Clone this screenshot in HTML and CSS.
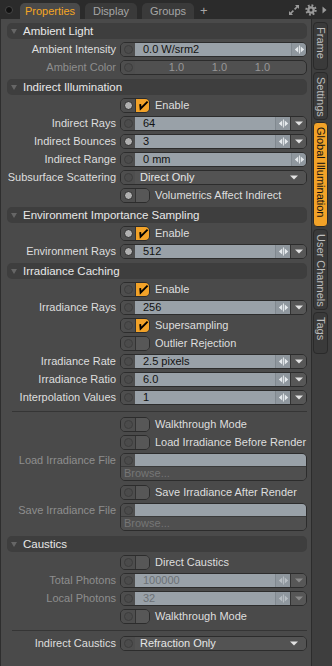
FILE: index.html
```html
<!DOCTYPE html>
<html lang="en">
  <head>
    <meta charset="UTF-8" />
    <title>Properties</title>
    <link rel="stylesheet" href="styles.css">
  </head>
  <body>
    <svg class="defs" width="0" height="0">
      <symbol id="spin" viewBox="0 0 12 10">
        <path d="M0.8 5 L4.6 1.6 V8.4Z M7.4 1.6 L11.2 5 L7.4 8.4Z" />
        <rect x="5.5" y="0.5" width="1" height="9" />
      </symbol>
      <symbol id="down" viewBox="0 0 8 5">
        <path d="M0 0.5H8L4 4.5Z" />
      </symbol>
      <symbol id="tick" viewBox="0 0 12 12">
        <path d="M3.2 5.2 L3.6 9.6 L10.6 2.6" fill="none" stroke="#000" stroke-width="1.9" />
      </symbol>
    </svg>

    <div class="app">
      <div class="topbar">
        <span class="dot"></span>
        <div class="tab tab-props active">Properties</div>
        <div class="tab tab-disp">Display</div>
        <div class="tab tab-groups">Groups</div>
        <span class="plus">+</span>
        <div class="tools">
          <svg width="12" height="12" viewBox="0 0 12 12" class="ico">
            <path d="M7 1H11V5L9.6 3.6L7.2 6L6 4.8L8.4 2.4Z M5 11H1V7L2.4 8.4L4.8 6L6 7.2L3.6 9.6Z" />
          </svg>
          <svg width="12" height="12" viewBox="0 0 12 12" class="ico">
            <circle cx="6" cy="6" r="4.6" fill="none" stroke="#9a9a9a" stroke-width="2.2" stroke-dasharray="1.8 1.8" />
            <circle cx="6" cy="6" r="3.8" />
            <circle cx="6" cy="6" r="1.5" fill="#2b2b2b" />
          </svg>
          <svg width="5" height="8" viewBox="0 0 5 8" class="ico">
            <path d="M0.5 0.5L4.5 4L0.5 7.5Z" />
          </svg>
        </div>
      </div>

      <div class="main">
        <div class="panel">
          <div class="sec">Ambient Light</div>
          <div class="row">
            <span class="lbl">Ambient Intensity</span>
            <div class="field"><span class="key"></span><span class="val">0.0 W/srm2</span><span class="spin"><svg><use href="#spin" /></svg></span></div>
          </div>
          <div class="row">
            <span class="lbl dim">Ambient Color</span>
            <div class="field dark"><span class="key"></span><span class="vals"><span>1.0</span><span>1.0</span><span>1.0</span></span></div>
          </div>

          <div class="sec">Indirect Illumination</div>
          <div class="row">
            <div class="ctl"><div class="check on"><span class="key set"></span><span class="box"><svg><use href="#tick" /></svg></span></div>Enable</div>
          </div>
          <div class="row">
            <span class="lbl">Indirect Rays</span>
            <div class="field"><span class="key"></span><span class="val">64</span><span class="spin"><svg><use href="#spin" /></svg></span><span class="drop"><svg><use href="#down" /></svg></span></div>
          </div>
          <div class="row">
            <span class="lbl">Indirect Bounces</span>
            <div class="field"><span class="key set"></span><span class="val">3</span><span class="spin"><svg><use href="#spin" /></svg></span><span class="drop"><svg><use href="#down" /></svg></span></div>
          </div>
          <div class="row">
            <span class="lbl">Indirect Range</span>
            <div class="field"><span class="key"></span><span class="val">0 mm</span><span class="spin"><svg><use href="#spin" /></svg></span></div>
          </div>
          <div class="row">
            <span class="lbl">Subsurface Scattering</span>
            <div class="field combo"><span class="key"></span><span class="val">Direct Only</span><span class="arrow"><svg><use href="#down" /></svg></span></div>
          </div>
          <div class="row">
            <div class="ctl"><div class="check"><span class="key set"></span><span class="box"></span></div>Volumetrics Affect Indirect</div>
          </div>

          <div class="sec">Environment Importance Sampling</div>
          <div class="row">
            <div class="ctl"><div class="check on"><span class="key set"></span><span class="box"><svg><use href="#tick" /></svg></span></div>Enable</div>
          </div>
          <div class="row">
            <span class="lbl">Environment Rays</span>
            <div class="field"><span class="key set"></span><span class="val">512</span><span class="spin"><svg><use href="#spin" /></svg></span><span class="drop"><svg><use href="#down" /></svg></span></div>
          </div>

          <div class="sec">Irradiance Caching</div>
          <div class="row">
            <div class="ctl"><div class="check on"><span class="key"></span><span class="box"><svg><use href="#tick" /></svg></span></div>Enable</div>
          </div>
          <div class="row">
            <span class="lbl">Irradiance Rays</span>
            <div class="field"><span class="key"></span><span class="val">256</span><span class="spin"><svg><use href="#spin" /></svg></span><span class="drop"><svg><use href="#down" /></svg></span></div>
          </div>
          <div class="row">
            <div class="ctl"><div class="check on"><span class="key"></span><span class="box"><svg><use href="#tick" /></svg></span></div>Supersampling</div>
          </div>
          <div class="row">
            <div class="ctl"><div class="check"><span class="key"></span><span class="box"></span></div>Outlier Rejection</div>
          </div>
          <div class="row">
            <span class="lbl">Irradiance Rate</span>
            <div class="field"><span class="key"></span><span class="val">2.5 pixels</span><span class="spin"><svg><use href="#spin" /></svg></span><span class="drop"><svg><use href="#down" /></svg></span></div>
          </div>
          <div class="row">
            <span class="lbl">Irradiance Ratio</span>
            <div class="field"><span class="key"></span><span class="val">6.0</span><span class="spin"><svg><use href="#spin" /></svg></span><span class="drop"><svg><use href="#down" /></svg></span></div>
          </div>
          <div class="row">
            <span class="lbl">Interpolation Values</span>
            <div class="field"><span class="key"></span><span class="val">1</span><span class="spin"><svg><use href="#spin" /></svg></span><span class="drop"><svg><use href="#down" /></svg></span></div>
          </div>
          <div class="sep"></div>
          <div class="row">
            <div class="ctl"><div class="check"><span class="key"></span><span class="box"></span></div>Walkthrough Mode</div>
          </div>
          <div class="row">
            <div class="ctl"><div class="check"><span class="key"></span><span class="box"></span></div>Load Irradiance Before Render</div>
          </div>
          <div class="row file-row">
            <span class="lbl dim">Load Irradiance File</span>
            <div class="file"><div class="file-top"><span class="key"></span><span class="val"></span></div><div class="browse">Browse...</div></div>
          </div>
          <div class="row">
            <div class="ctl"><div class="check"><span class="key"></span><span class="box"></span></div>Save Irradiance After Render</div>
          </div>
          <div class="row file-row">
            <span class="lbl dim">Save Irradiance File</span>
            <div class="file"><div class="file-top"><span class="key"></span><span class="val"></span></div><div class="browse">Browse...</div></div>
          </div>

          <div class="sec">Caustics</div>
          <div class="row">
            <div class="ctl"><div class="check"><span class="key"></span><span class="box"></span></div>Direct Caustics</div>
          </div>
          <div class="row">
            <span class="lbl dim">Total Photons</span>
            <div class="field off"><span class="key"></span><span class="val">100000</span><span class="spin"><svg><use href="#spin" /></svg></span><span class="drop"><svg><use href="#down" /></svg></span></div>
          </div>
          <div class="row">
            <span class="lbl dim">Local Photons</span>
            <div class="field off"><span class="key"></span><span class="val">32</span><span class="spin"><svg><use href="#spin" /></svg></span><span class="drop"><svg><use href="#down" /></svg></span></div>
          </div>
          <div class="row">
            <div class="ctl"><div class="check"><span class="key"></span><span class="box"></span></div>Walkthrough Mode</div>
          </div>
          <div class="sep"></div>
          <div class="row">
            <span class="lbl">Indirect Caustics</span>
            <div class="field combo"><span class="key"></span><span class="val">Refraction Only</span><span class="arrow"><svg><use href="#down" /></svg></span></div>
          </div>
        </div>

        <div class="sidetabs">
          <div class="vtab t-frame">Frame</div>
          <div class="vtab t-settings">Settings</div>
          <div class="vtab t-gi active">Global Illumination</div>
          <div class="vtab t-user">User Channels</div>
          <div class="vtab t-tags">Tags</div>
        </div>
      </div>
    </div>
  </body>
</html>
```

FILE: styles.css
```css
body {
  margin: 0;
  background: #2b2b2b;
  font-family: "Liberation Sans", Arial, sans-serif;
  font-size: 11px;
  color: #dedede;
}
.defs {
  position: absolute;
}
.app {
  width: 332px;
  height: 666px;
  display: flex;
  flex-direction: column;
  overflow: hidden;
}

/* top tab strip */
.topbar {
  height: 19px;
  flex: none;
  display: flex;
  align-items: flex-end;
  background: #2b2b2b;
}
.dot {
  align-self: center;
  width: 6px;
  height: 6px;
  border-radius: 50%;
  background: #111;
  border: 1px solid #474747;
  margin: 0 7px 0 5px;
}
.tab {
  height: 16px;
  line-height: 16px;
  text-align: center;
  border-radius: 5px 5px 0 0;
  background: #3a3a3a;
  color: #a6a6a6;
  margin-right: 5px;
}
.tab-props {
  width: 60px;
}
.tab-disp,
.tab-groups {
  width: 52px;
}
.tab.active {
  background: #4a4a4a;
  color: #f5a623;
}
.plus {
  color: #a6a6a6;
  font-size: 13px;
  line-height: 17px;
  margin-left: 1px;
}
.tools {
  margin-left: auto;
  align-self: center;
  display: flex;
  align-items: center;
  gap: 5px;
  padding-right: 5px;
}
.ico {
  fill: #9a9a9a;
}

.main {
  flex: 1;
  display: flex;
}
.panel {
  width: 311px;
  box-sizing: border-box;
  background: #4a4a4a;
  border-left: 1px solid #2e2e2e;
  padding: 1px 4px 0 6px;
}

/* section headers */
.sec {
  height: 16px;
  margin: 3px 0 1px;
  background: #3e3e3e;
  border-radius: 5px;
  display: flex;
  align-items: center;
  padding-left: 4px;
  font-size: 11.5px;
  color: #e8e8e8;
}
.sec::before {
  content: "";
  border-left: 3px solid transparent;
  border-right: 3px solid transparent;
  border-top: 5px solid #666;
  margin-right: 6px;
}

.row {
  display: grid;
  grid-template-columns: 109px 187px;
  column-gap: 4px;
  height: 18px;
  align-items: center;
}
.lbl {
  text-align: right;
  white-space: nowrap;
}
.lbl.dim {
  color: #8e8e8e;
}
.ctl {
  grid-column: 2;
  display: flex;
  align-items: center;
  gap: 5px;
  white-space: nowrap;
}

/* value fields */
.field {
  display: flex;
  height: 15px;
  box-sizing: border-box;
  border: 1px solid #2c2c2c;
  border-radius: 5px;
  overflow: hidden;
  background: #505050;
}
.key {
  width: 14px;
  flex: none;
  display: flex;
  align-items: center;
  justify-content: center;
  background: #4e4e4e;
}
.key::before {
  content: "";
  width: 9px;
  height: 9px;
  box-sizing: border-box;
  border-radius: 50%;
  border: 1px solid #3c3c3c;
  background: #4b4b4b;
}
.key.set::before {
  background: #b0b0b0;
  border-color: #2a2a2a;
}
.val {
  flex: 1;
  background: #99a1a8;
  color: #111;
  padding-left: 8px;
  line-height: 13px;
  white-space: nowrap;
}
.spin {
  width: 14px;
  flex: none;
  background: #8f979e;
  border-left: 1px solid #80888f;
  display: flex;
  align-items: center;
  justify-content: center;
}
.spin svg {
  width: 11px;
  height: 9px;
  fill: #e6eaed;
}
.drop {
  width: 15px;
  flex: none;
  background: #575757;
  border-left: 1px solid #333;
  display: flex;
  align-items: center;
  justify-content: center;
}
.drop svg,
.arrow svg {
  width: 8px;
  height: 5px;
  fill: #e2e2e2;
}
.field.off .val {
  color: #6c7176;
}
.field.off .spin svg {
  fill: #b8bec3;
}
.field.off .drop svg {
  fill: #8a8a8a;
}

.field.dark .vals {
  flex: 1;
  display: flex;
  padding-left: 20px;
  color: #979797;
  line-height: 13px;
}
.field.dark .vals span {
  width: 43px;
  text-align: center;
}

.field.combo .val {
  background: #535353;
  color: #e6e6e6;
  padding-left: 5px;
}
.field.combo .arrow {
  width: 16px;
  flex: none;
  background: #535353;
  display: flex;
  align-items: center;
}

/* toggles */
.check {
  display: flex;
  width: 30px;
  height: 15px;
  box-sizing: border-box;
  border: 1px solid #2c2c2c;
  border-radius: 5px;
  overflow: hidden;
  flex: none;
}
.check .box {
  flex: 1;
  background: #575757;
  border-left: 1px solid #333;
  display: flex;
  align-items: center;
  justify-content: center;
}
.check.on .box {
  background: #f2a228;
}
.check .box svg {
  width: 12px;
  height: 12px;
}

/* file pickers */
.file-row {
  height: 32px;
  align-items: start;
  padding-top: 2px;
  box-sizing: border-box;
}
.file-row .lbl {
  line-height: 14px;
}
.file {
  height: 28px;
  box-sizing: border-box;
  border: 1px solid #2c2c2c;
  border-radius: 5px;
  overflow: hidden;
  display: flex;
  flex-direction: column;
}
.file-top {
  height: 13px;
  display: flex;
}
.browse {
  flex: 1;
  background: #4f4f4f;
  border-top: 1px solid #3a3a3a;
  color: #767676;
  padding-left: 3px;
  line-height: 13px;
}

.sep {
  height: 1px;
  background: #353535;
  margin: 5px 0 3px 5px;
}

/* vertical tabs on the right */
.sidetabs {
  width: 21px;
  box-sizing: border-box;
  background: #3e3e3e;
  border-left: 1px solid #2c2c2c;
  padding: 3px 0 0 1px;
  display: flex;
  flex-direction: column;
  gap: 2px;
}
.vtab {
  width: 15px;
  box-sizing: border-box;
  writing-mode: vertical-rl;
  background: #3a3a3a;
  border: 1px solid #2a2a2a;
  border-radius: 4px;
  color: #bdbdbd;
  line-height: 13px;
  padding-top: 4px;
  white-space: nowrap;
}
.vtab.active {
  background: #f2a228;
  color: #111;
}
.t-frame {
  height: 48px;
}
.t-settings {
  height: 48px;
}
.t-gi {
  height: 105px;
}
.t-user {
  height: 81px;
}
.t-tags {
  height: 42px;
}
```
